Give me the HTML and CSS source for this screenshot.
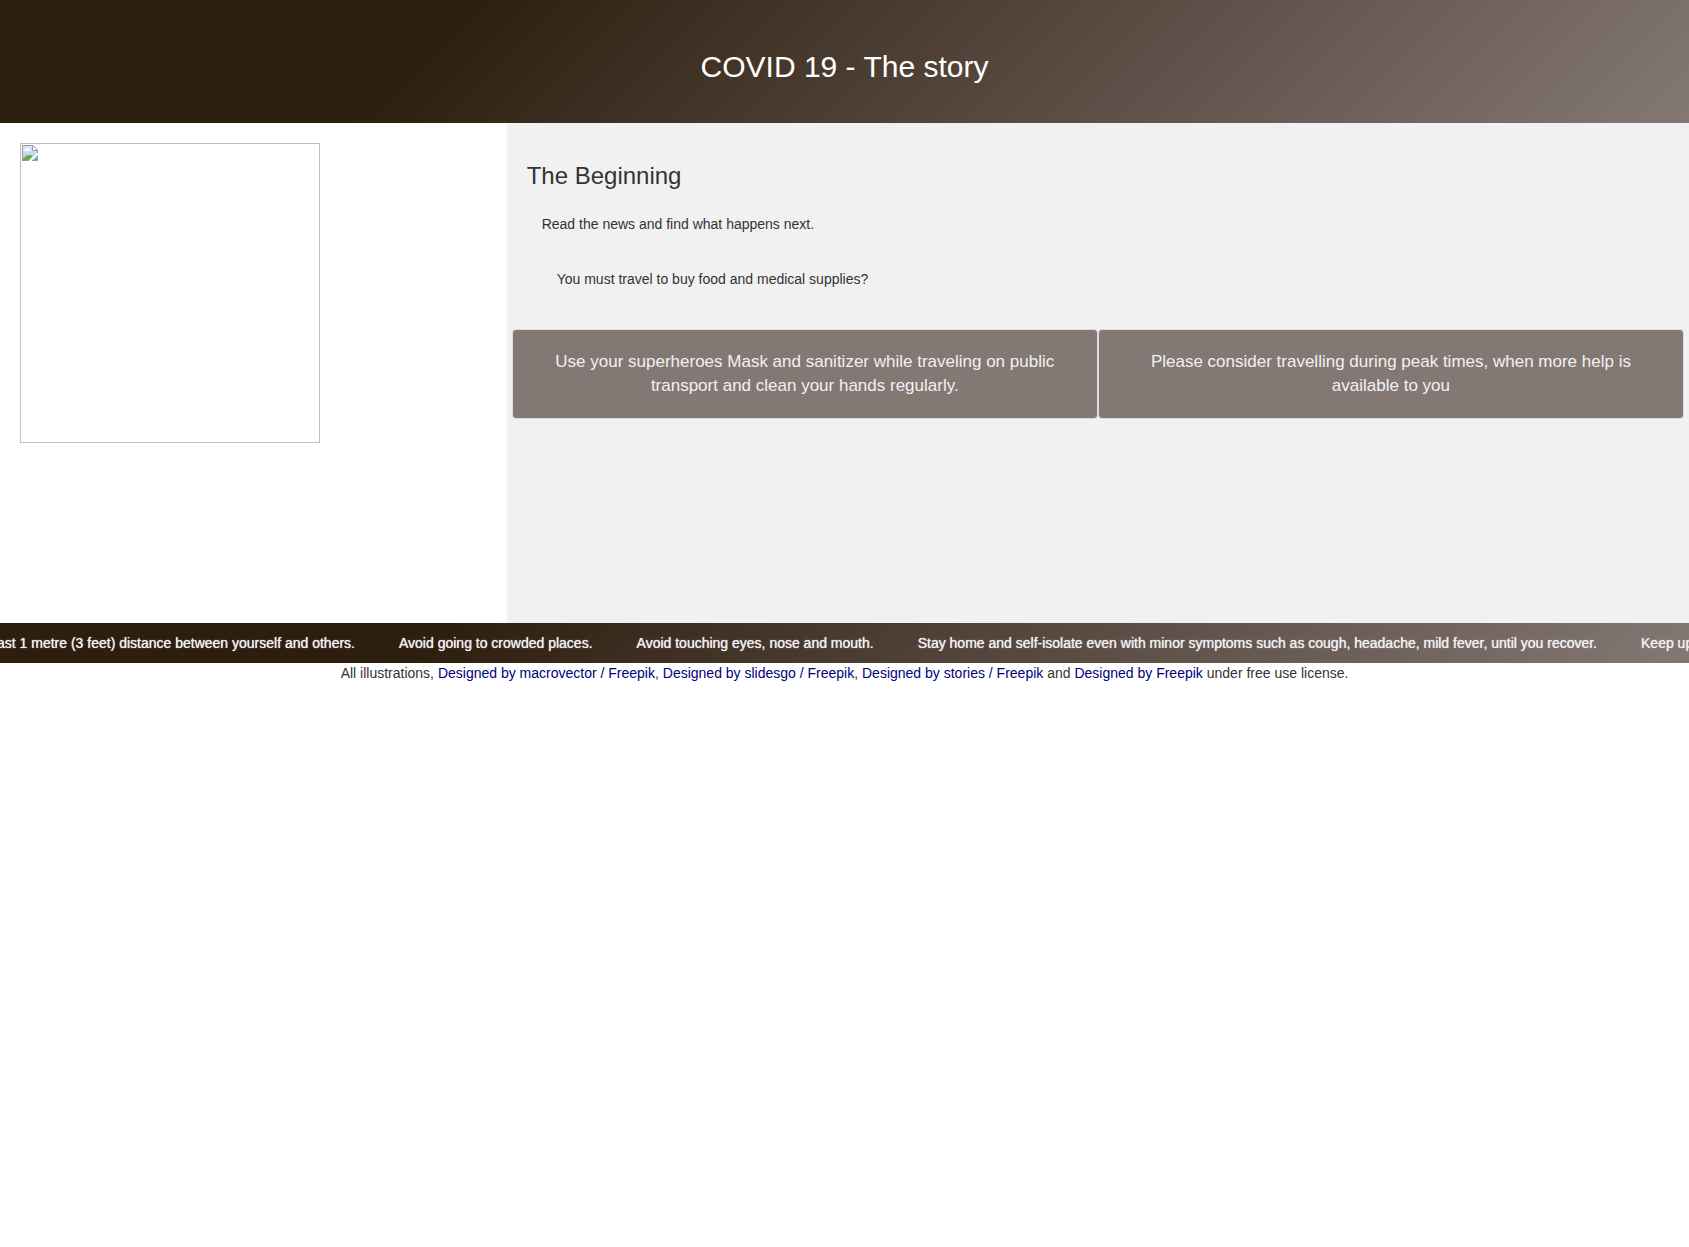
FILE: index.html
```html
<!DOCTYPE html>
<html lang="en">
<head>
<meta charset="utf-8">
<meta name="viewport" content="width=device-width, initial-scale=1">
<title>COVID 19 - The story</title>
<link rel="stylesheet" href="styles.css">
</head>
<body>
<header class="banner">
  <h1 class="banner-title">COVID 19 - The story</h1>
</header>
<main class="story">
  <section class="scene">
    <div class="illustration" role="img" aria-label="Illustration unavailable">
      <svg class="missing-icon" width="16" height="16" viewBox="0 0 16 16" aria-hidden="true">
        <defs>
          <linearGradient id="sky" x1="0" y1="0" x2="0" y2="1">
            <stop offset="0" stop-color="#dde8fb"/>
            <stop offset="1" stop-color="#b4c8f2"/>
          </linearGradient>
        </defs>
        <path d="M0 0H11L16 5V8L8 16H0Z" fill="#fff"/>
        <path d="M1 1H10V5H15V8L7 15H1Z" fill="url(#sky)"/>
        <path d="M2 6V5H3V4H4V3H6V4H8V6Z" fill="#fff"/>
        <path d="M1 15V14L3 12L5 10.500L8 10L11 11L7 15Z" fill="#63ac3e"/>
        <path d="M0.500 16V0.500H11L15.500 5V8" fill="none" stroke="#999"/>
        <path d="M10.500 1V5.500H15" fill="none" stroke="#999"/>
        <path d="M0 15.500H7" stroke="#999"/>
        <path d="M10 15L16 9.500V16H10Z" fill="#b4c8f2"/>
        <path d="M12 15L14 13H15V15Z" fill="#63ac3e"/>
        <path d="M10 15.500H15.500V11" fill="none" stroke="#999"/>
      </svg>
    </div>
  </section>
  <section class="chapter">
    <h2 class="chapter-title">The Beginning</h2>
    <p class="lead">Read the news and find what happens next.</p>
    <p class="question">You must travel to buy food and medical supplies?</p>
    <div class="choices">
      <button class="choice" type="button">Use your superheroes Mask and sanitizer while traveling on public transport and clean your hands regularly.</button>
      <button class="choice" type="button">Please consider travelling during peak times, when more help is available to you</button>
    </div>
  </section>
</main>
<div class="ticker">
  <ul class="ticker-track">
    <li class="ticker-lead"><span>Maintain at least 1 metre (3 feet) distance between yourself and others.</span></li>
    <li>Avoid going to crowded places.</li>
    <li>Avoid touching eyes, nose and mouth.</li>
    <li>Stay home and self-isolate even with minor symptoms such as cough, headache, mild fever, until you recover.</li>
    <li>Keep up to date on the latest information.</li>
  </ul>
</div>
<footer class="credits">All illustrations, <a href="#macrovector">Designed by macrovector / Freepik</a>, <a href="#slidesgo">Designed by slidesgo / Freepik</a>, <a href="#stories">Designed by stories / Freepik</a> and <a href="#freepik">Designed by Freepik</a> under free use license.</footer>
</body>
</html>
```
FILE: styles.css
```css
* {
  box-sizing: border-box;
}

body {
  margin: 0;
  background: #fff;
  color: #333;
  font: 14px/20px "Liberation Sans", Arial, sans-serif;
}

.banner,
.ticker {
  background: linear-gradient(135deg, #2e1e0f 26%, #847875);
}

.banner {
  padding: 50px 20px 40px;
  text-align: center;
}

.banner-title {
  margin: 0;
  color: #fff;
  font-size: 30px;
  font-weight: 400;
  line-height: 33px;
}

.story {
  display: grid;
  grid-template-columns: 3fr 7fr;
  min-height: 500px;
}

.scene {
  padding: 20px;
}

.illustration {
  width: 300px;
  height: 300px;
  padding: 1px;
  border: 1px solid #c0c0c0;
}

.missing-icon {
  display: block;
}

.chapter {
  background: #f1f1f1;
}

.chapter-title {
  margin: 40px 20px 0;
  font-size: 24px;
  font-weight: 400;
  line-height: 26px;
}

.lead {
  margin: 25px 35px 0;
}

.question {
  margin: 35px 50px 0;
}

.choices {
  display: grid;
  grid-template-columns: 1fr 1fr;
  margin: 40px 5px 0;
}

.choice {
  padding: 20px;
  border: 1px solid #ddd;
  border-radius: 4px;
  background: #847875;
  color: #f1f1f1;
  font: 17px/24px "Liberation Sans", Arial, sans-serif;
  text-align: center;
  cursor: pointer;
}

.ticker {
  overflow: hidden;
  padding: 10px 0;
  color: #f1f1f1;
  text-shadow: 0 0 1px #f1f1f1;
}

.ticker-track {
  display: flex;
  gap: 44px;
  margin: 0;
  padding: 0;
  list-style: none;
  white-space: nowrap;
}

.ticker-track li {
  flex: none;
}

.ticker-track .ticker-lead {
  display: flex;
  justify-content: flex-end;
  width: 355px;
}

.credits {
  text-align: center;
}

.credits a {
  color: #000080;
  text-decoration: none;
}
```
